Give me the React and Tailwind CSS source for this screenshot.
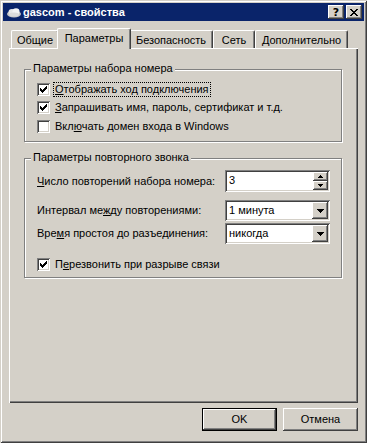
import React from "react";

const FONT = "font-['Liberation_Sans',Arial,sans-serif]";
const RAISED =
  "shadow-[inset_-1px_-1px_#404040,inset_1px_1px_#ffffff,inset_-2px_-2px_#808080]";
const SUNKEN =
  "shadow-[inset_1px_1px_#808080,inset_-1px_-1px_#ffffff,inset_2px_2px_#404040,inset_-2px_-2px_#d4d0c8]";

function CheckMark() {
  return (
    <svg
      className="absolute left-[3px] top-[3px]"
      width="7"
      height="7"
      viewBox="0 0 7 7"
      shapeRendering="crispEdges"
    >
      <path
        fill="#000"
        d="M6 0h1v1h-1zM5 1h2v1h-2zM0 2h1v1h-1zM4 2h3v1h-3zM0 3h2v1h-2zM3 3h3v1h-3zM0 4h5v1h-5zM1 5h3v1h-3zM2 6h1v1h-1z"
      />
    </svg>
  );
}

function CheckBox({ checked }) {
  return (
    <span className={`relative block w-[13px] h-[13px] shrink-0 bg-white ${SUNKEN}`}>
      {checked && <CheckMark />}
    </span>
  );
}

function CheckRow({ checked, focused, children, className = "" }) {
  return (
    <div className={`flex items-center h-[13px] ${className}`}>
      <CheckBox checked={checked} />
      <span
        className={`ml-[3px] px-[1px] leading-[13px] border border-dotted ${
          focused ? "border-black" : "border-transparent"
        }`}
      >
        {children}
      </span>
    </div>
  );
}

function DownArrow() {
  return (
    <svg width="7" height="4" viewBox="0 0 7 4" shapeRendering="crispEdges">
      <path fill="#000" d="M0 0h7v1h-7zM1 1h5v1h-5zM2 2h3v1h-3zM3 3h1v1h-1z" />
    </svg>
  );
}

function Combo({ value }) {
  return (
    <div className={`relative w-[105px] h-[21px] bg-white ${SUNKEN} flex items-center`}>
      <span className="pl-[4px] leading-[13px] flex-1">{value}</span>
      <div
        className={`mr-[2px] w-[16px] h-[17px] bg-[#d4d0c8] flex items-center justify-center ${RAISED}`}
      >
        <DownArrow />
      </div>
    </div>
  );
}

function Spinner({ value }) {
  return (
    <div className={`w-[105px] h-[22px] bg-white ${SUNKEN} flex items-start`}>
      <span className="pl-[4px] pt-[4px] leading-[13px] flex-1">{value}</span>
      <div className="mt-[2px] mr-[2px] flex flex-col">
        <div
          className={`w-[15px] h-[9px] bg-[#d4d0c8] flex items-center justify-center ${RAISED}`}
        >
          <svg width="5" height="3" viewBox="0 0 5 3" shapeRendering="crispEdges">
            <path fill="#000" d="M2 0h1v1h-1zM1 1h3v1h-3zM0 2h5v1h-5z" />
          </svg>
        </div>
        <div
          className={`w-[15px] h-[9px] bg-[#d4d0c8] flex items-center justify-center ${RAISED}`}
        >
          <svg width="5" height="3" viewBox="0 0 5 3" shapeRendering="crispEdges">
            <path fill="#000" d="M0 0h5v1h-5zM1 1h3v1h-3zM2 2h1v1h-1z" />
          </svg>
        </div>
      </div>
    </div>
  );
}

function Group({ title, className = "", children }) {
  return (
    <div
      className={`relative ml-[15px] w-[318px] border border-[#808080] shadow-[1px_1px_0_#ffffff,inset_1px_1px_0_#ffffff] ${className}`}
    >
      <span className="absolute left-[6px] top-[-8px] px-[2px] bg-[#d4d0c8] leading-[13px]">
        {title}
      </span>
      {children}
    </div>
  );
}

function Tab({ label, selected, w }) {
  if (selected) {
    return (
      <div
        className={`relative z-10 -mx-[2px] mb-[-1px] h-[21px] bg-[#d4d0c8] border-l border-t border-white border-r border-r-[#404040] rounded-tl-[2px] rounded-tr-[2px] shadow-[inset_-1px_0_#808080] flex justify-center pt-[3px] leading-[13px]`}
        style={{ width: w + 4 }}
      >
        {label}
      </div>
    );
  }
  return (
    <div
      className={`h-[18px] bg-[#d4d0c8] border-l border-t border-white border-r border-r-[#404040] rounded-tl-[2px] rounded-tr-[2px] shadow-[inset_-1px_0_#808080] flex justify-center pt-[3px] leading-[13px]`}
      style={{ width: w }}
    >
      {label}
    </div>
  );
}

function Button({ children, isDefault }) {
  const cls = isDefault
    ? "shadow-[inset_0_0_0_1px_#000000,inset_-2px_-2px_#404040,inset_2px_2px_#ffffff,inset_-3px_-3px_#808080]"
    : RAISED;
  return (
    <div
      className={`w-[75px] h-[23px] bg-[#d4d0c8] flex items-center justify-center leading-[13px] ${cls}`}
    >
      {children}
    </div>
  );
}

export default function App() {
  return (
    <div
      className={`${FONT} text-[11px] text-black w-[367px] h-[443px] bg-[#d4d0c8] p-[3px] flex flex-col shadow-[inset_1px_1px_#d4d0c8,inset_-1px_-1px_#404040,inset_2px_2px_#ffffff,inset_-2px_-2px_#808080]`}
    >
      {/* Title bar */}
      <div className="h-[18px] bg-[#0a246a] flex items-center pl-[3px] pr-[2px] shrink-0">
        <svg width="16" height="16" viewBox="0 0 16 16" className="shrink-0">
          <ellipse cx="8" cy="10" rx="7" ry="3.5" fill="#c8c8c8" />
          <ellipse cx="6" cy="8" rx="3.5" ry="3" fill="#e8e8e8" />
          <ellipse cx="10" cy="7.5" rx="3.5" ry="3.2" fill="#f4f4f4" />
          <ellipse cx="8" cy="10.5" rx="5" ry="2" fill="#dcdcdc" />
        </svg>
        <span className="ml-[1px] text-white font-bold leading-[13px]">
          gascom - свойства
        </span>
        <div className="flex-1" />
        <div
          className={`w-[16px] h-[14px] bg-[#d4d0c8] flex items-center justify-center ${RAISED}`}
        >
          <span className="font-bold text-[11px] leading-[11px] font-['DejaVu_Sans',sans-serif]">?</span>
        </div>
        <div
          className={`ml-[2px] w-[16px] h-[14px] bg-[#d4d0c8] flex items-center justify-center ${RAISED}`}
        >
          <svg width="8" height="7" viewBox="0 0 8 7" shapeRendering="crispEdges">
            <path
              fill="#000"
              d="M0 0h2v1h-2zM6 0h2v1h-2zM1 1h2v1h-2zM5 1h2v1h-2zM2 2h4v1h-4zM3 3h2v1h-2zM2 4h4v1h-4zM1 5h2v1h-2zM5 5h2v1h-2zM0 6h2v1h-2zM6 6h2v1h-2z"
            />
          </svg>
        </div>
      </div>

      {/* Body */}
      <div className="px-[6px] pt-[7px] flex flex-col">
        {/* Tabs */}
        <div className="flex items-end h-[20px] pl-[2px]">
          <Tab label="Общие" w={48} />
          <Tab label="Параметры" w={70} selected />
          <Tab label="Безопасность" w={84} />
          <Tab label="Сеть" w={42} />
          <Tab label="Дополнительно" w={93} />
        </div>

        {/* Panel */}
        <div
          className={`h-[355px] bg-[#d4d0c8] pt-[21px] shadow-[inset_1px_1px_#ffffff,inset_-1px_-1px_#404040,inset_-2px_-2px_#808080]`}
        >
          <Group title="Параметры набора номера" className="pt-[13px] pb-[8px] pl-[12px]">
            <CheckRow checked focused>
              <u>О</u>тображать ход подключения
            </CheckRow>
            <CheckRow checked className="mt-[5px]">
              <u>З</u>апрашивать имя, пароль, сертификат и т.д.
            </CheckRow>
            <CheckRow className="mt-[6px]">
              Вкл<u>ю</u>чать домен входа в Windows
            </CheckRow>
          </Group>

          <Group
            title="Параметры повторного звонка"
            className="mt-[16px] pt-[11px] pb-[6px] pl-[12px]"
          >
            <div className="grid grid-cols-[188px_105px] items-center">
              <span className="leading-[13px]">
                <u>Ч</u>исло повторений набора номера:
              </span>
              <Spinner value="3" />
            </div>
            <div className="grid grid-cols-[188px_105px] items-center mt-[8px]">
              <span className="leading-[13px]">
                Интервал ме<u>ж</u>ду повторениями:
              </span>
              <Combo value="1 минута" />
            </div>
            <div className="grid grid-cols-[188px_105px] items-center mt-[2px]">
              <span className="leading-[13px]">
                Вре<u>м</u>я простоя до разъединения:
              </span>
              <Combo value="никогда" />
            </div>
            <CheckRow checked className="mt-[14px]">
              П<u>е</u>резвонить при разрыве связи
            </CheckRow>
          </Group>
        </div>

        {/* Buttons */}
        <div className="mt-[5px] flex justify-end gap-[6px]">
          <Button isDefault>OK</Button>
          <Button>Отмена</Button>
        </div>
      </div>
    </div>
  );
}
